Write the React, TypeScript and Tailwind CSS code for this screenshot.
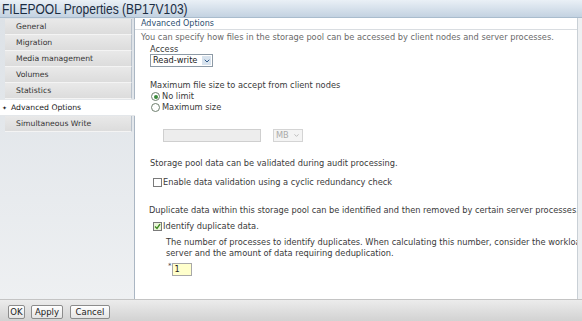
import { ChevronDown } from 'lucide-react'

const navItems = [
  'General',
  'Migration',
  'Media management',
  'Volumes',
  'Statistics',
  'Advanced Options',
  'Simultaneous Write',
]

function NavItem({ label, selected }: { label: string; selected: boolean }) {
  if (selected) {
    return (
      <div className="h-[17px] leading-[17px] bg-white pl-[2px] text-[7.7px] text-[#222] border-y border-[#e4e7ea] mr-[-1px] relative z-10 flex items-center">
        <span className="w-[9px] text-[6px]">✦</span>
        {label}
      </div>
    )
  }
  return (
    <div className="ml-[5px] mr-[2px] h-[16px] leading-[16px] pl-[11px] text-[7.7px] text-[#333] bg-gradient-to-b from-[#e9e9e9] to-[#dcdcdc] border-b border-[#f4f4f4] border-r border-r-[#b9c2cc]">
      {label}
    </div>
  )
}

function Radio({ checked }: { checked: boolean }) {
  return (
    <span className="w-[9px] h-[9px] rounded-full border border-[#6f7f6f] bg-white inline-flex items-center justify-center mr-[2px]">
      {checked && <span className="w-[4px] h-[4px] rounded-full bg-[#3a8a3a]" />}
    </span>
  )
}

function Checkbox({ checked }: { checked: boolean }) {
  return (
    <span
      className={`w-[9px] h-[9px] border border-[#7a7a7a] inline-flex items-center justify-center mr-[1px] ${
        checked ? 'bg-[#eaf5d8]' : 'bg-white'
      }`}
    >
      {checked && (
        <svg width="7" height="7" viewBox="0 0 7 7">
          <path d="M1 3.5 L3 5.5 L6 1.2" stroke="#3d8a1f" strokeWidth="1.4" fill="none" />
        </svg>
      )}
    </span>
  )
}

function Button({ label, width }: { label: string; width: string }) {
  return (
    <button
      className={`${width} h-[14px] leading-[12px] text-[8.5px] text-[#222] border border-[#8c8c8c] rounded-[2px] bg-gradient-to-b from-[#ffffff] to-[#e4e4e4] text-center`}
    >
      {label}
    </button>
  )
}

export default function App() {
  return (
    <div
      className="w-[582px] h-[321px] flex flex-col bg-white overflow-hidden"
      style={{ fontFamily: '"DejaVu Sans", Verdana, sans-serif' }}
    >
      <div
        className="h-[18px] shrink-0 bg-gradient-to-b from-[#eaf0f6] to-[#c3d2e1] border-b border-[#a9bccd] pl-[2px] leading-[17px] text-[#1b2d42]"
        style={{ fontFamily: '"Liberation Sans", Arial, sans-serif' }}
      >
        <span className="inline-block text-[14px] scale-x-[0.86] origin-left whitespace-nowrap">
          FILEPOOL Properties (BP17V103)
        </span>
      </div>

      <div className="flex flex-1 min-h-0">
        <div className="w-[135px] shrink-0 bg-gradient-to-b from-[#dde2e7] to-[#eef0f2] border-r border-[#aab6c3] pt-[1px]">
          {navItems.map((item) => (
            <NavItem key={item} label={item} selected={item === 'Advanced Options'} />
          ))}
        </div>

        <div className="flex-1 flex min-w-0">
          <div className="flex-1 min-w-0 overflow-hidden border-r border-[#c9d0d6] text-[8.25px] text-[#3a3a3a]">
            <div className="h-[12px] leading-[12px] pl-[6px] text-[#2d4f70] text-[8px] border-b border-[#d9dde1]">
              Advanced Options
            </div>
            <div className="mt-[2px] h-[11px] leading-[11px] pl-[6px] text-[#6a6a6a]">
              You can specify how files in the storage pool can be accessed by client nodes and server processes.
            </div>
            <div className="pl-[15px]">
              <div className="mt-[1px] h-[10px] leading-[10px]">Access</div>
              <div className="w-[63px] h-[13px] border border-[#8d9aa6] flex items-center justify-between pl-[2px] pr-[1px] bg-white">
                <span className="text-[#222]">Read-write</span>
                <span className="w-[9px] h-[9px] bg-[#d8e3ee] flex items-center justify-center">
                  <ChevronDown size={8} strokeWidth={3} color="#2f5a8a" />
                </span>
              </div>

              <div className="mt-[13px] h-[10px] leading-[10px]">Maximum file size to accept from client nodes</div>
              <div className="mt-[1px] h-[11px] flex items-center pl-[1px]">
                <Radio checked />
                No limit
              </div>
              <div className="h-[11px] flex items-center pl-[1px]">
                <Radio checked={false} />
                Maximum size
              </div>

              <div className="mt-[16px] flex items-center">
                <div className="ml-[13px] w-[98px] h-[13px] bg-[#ededed] border border-[#cfcfcf]" />
                <div className="ml-[12px] w-[30px] h-[13px] border border-[#d4d4d4] bg-[#f4f4f4] flex items-center justify-between px-[2px] text-[#aaa]">
                  MB
                  <ChevronDown size={7} strokeWidth={3} color="#b5b5b5" />
                </div>
              </div>

              <div className="mt-[16px] h-[11px] leading-[11px]">Storage pool data can be validated during audit processing.</div>
              <div className="mt-[8px] h-[10px] flex items-center pl-[3px]">
                <Checkbox checked={false} />
                Enable data validation using a cyclic redundancy check
              </div>

              <div className="mt-[18px] h-[11px] leading-[11px] ml-[-1px] whitespace-nowrap">
                Duplicate data within this storage pool can be identified and then removed by certain server processes.
              </div>
              <div className="mt-[5px] h-[10px] flex items-center pl-[3px]">
                <Checkbox checked />
                Identify duplicate data.
              </div>

              <div className="mt-[6px] pl-[16px] leading-[11px] whitespace-nowrap">
                <div>The number of processes to identify duplicates. When calculating this number, consider the workload of the</div>
                <div>server and the amount of data requiring deduplication.</div>
              </div>
              <div className="mt-[4px] pl-[18px] flex items-start">
                <span className="text-[7px] leading-[6px] text-[#444]">*</span>
                <div className="w-[20px] h-[13px] bg-[#ffffcc] border border-[#a8a8a8] pl-[2px] leading-[11px] text-[#222]">1</div>
              </div>
            </div>
          </div>
          <div className="w-[4px] shrink-0 bg-[#eef0f2]" />
        </div>
      </div>

      <div className="h-[22px] shrink-0 border-t border-[#c4c4c4] bg-gradient-to-b from-[#ececec] to-[#d2d2d2] flex items-center pl-[8px] pt-[2px]">
        <Button label="OK" width="w-[17px]" />
        <span className="w-[6px]" />
        <Button label="Apply" width="w-[32px]" />
        <span className="w-[7px]" />
        <Button label="Cancel" width="w-[40px]" />
      </div>
    </div>
  )
}
